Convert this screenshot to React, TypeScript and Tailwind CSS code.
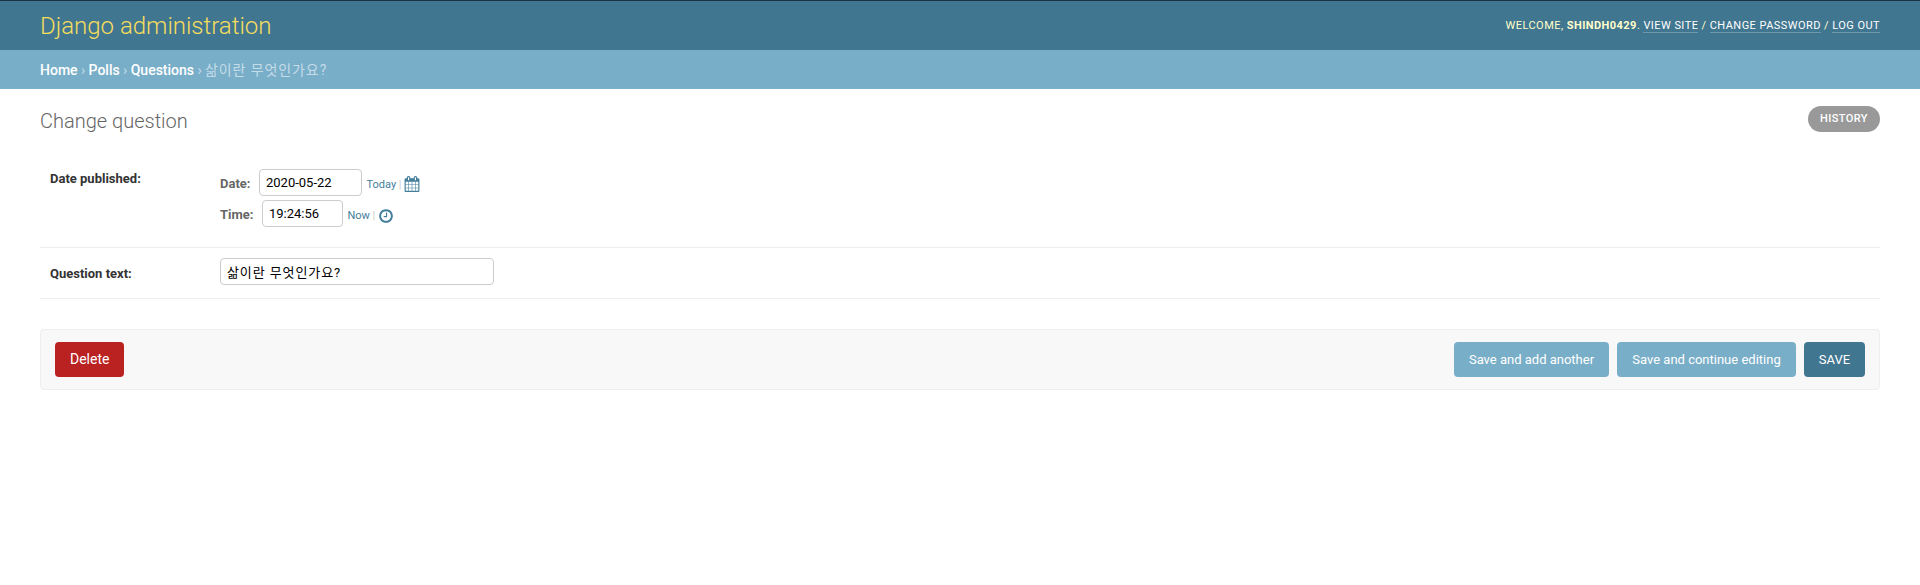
import type { ReactNode } from 'react';

function CalendarIcon() {
  return (
    <svg width="16" height="16" viewBox="0 0 1792 1792" fill="#447e9b" aria-hidden="true">
      <path d="M192 1664h288v-288h-288v288zm352 0h320v-288h-320v288zm-352-352h288v-320h-288v320zm352 0h320v-320h-320v320zm-352-384h288v-288h-288v288zm736 736h320v-288h-320v288zm-384-736h320v-288h-320v288zm768 736h288v-288h-288v288zm-384-352h320v-320h-320v320zm-352-864v-288q0-13-9.5-22.5t-22.5-9.5h-64q-13 0-22.5 9.5t-9.5 22.5v288q0 13 9.5 22.5t22.5 9.5h64q13 0 22.5-9.5t9.5-22.5zm736 864h288v-320h-288v320zm-384-384h320v-288h-320v288zm384 0h288v-288h-288v288zm32-480v-288q0-13-9.5-22.5t-22.5-9.5h-64q-13 0-22.5 9.5t-9.5 22.5v288q0 13 9.5 22.5t22.5 9.5h64q13 0 22.5-9.5t9.5-22.5zm384-64v1280q0 52-38 90t-90 38h-1408q-52 0-90-38t-38-90v-1280q0-52 38-90t90-38h128v-96q0-66 47-113t113-47h64q66 0 113 47t47 113v96h384v-96q0-66 47-113t113-47h64q66 0 113 47t47 113v96h128q52 0 90 38t38 90z" />
    </svg>
  );
}

function ClockIcon() {
  return (
    <svg className="mt-px -mb-px" width="16" height="16" viewBox="0 0 1792 1792" fill="#447e9b" aria-hidden="true">
      <path d="M1024 544v448q0 14-9 23t-23 9h-320q-14 0-23-9t-9-23v-64q0-14 9-23t23-9h224v-352q0-14 9-23t23-9h64q14 0 23 9t9 23zm416 352q0-148-73-273t-198-198-273-73-273 73-198 198-73 273 73 273 198 198 273 73 273-73 198-198 73-273zm224 0q0 209-103 385.5t-279.5 279.5-385.5 103-385.5-103-279.5-279.5-103-385.5 103-385.5 279.5-279.5 385.5-103 385.5 103 279.5 279.5 103 385.5z" />
    </svg>
  );
}

function ToolLink({ children }: { children: ReactNode }) {
  return <a href="#" className="border-b border-white/25 text-white">{children}</a>;
}

function Shortcut({ label, children }: { label: string; children: ReactNode }) {
  return (
    <span className="flex items-center pt-[3px] pl-[4.5px] text-[11px] leading-4 text-[#447e9b]">
      <a href="#" className="mt-px -mb-px">{label}</a>
      <span className="mt-px -mb-px w-[8px] text-center text-[#ccc]">|</span>
      <a href="#">{children}</a>
    </span>
  );
}

const input = 'h-[27px] rounded-[4px] border border-[#ccc] bg-white px-[6px] pb-px text-[13px] text-black outline-none';
const button = 'h-[35px] rounded-[4px] text-[13px] text-white';

export default function App() {
  return (
    <div className="min-h-[585px] bg-white font-[Roboto,'Noto_Sans_CJK_KR',sans-serif] text-[13px] text-[#333]">
      <header className="flex h-[50px] items-center justify-between border-t border-[#1b3442] bg-[#417690] px-10">
        <h1 className="text-[24px] leading-7 font-light text-[#f5dd5d]">Django administration</h1>
        <div className="text-[11px] leading-[13px] tracking-[0.45px] text-[#ffc] uppercase">
          Welcome, <strong className="font-bold">shindh0429</strong>. <ToolLink>View site</ToolLink> / <ToolLink>Change password</ToolLink> / <ToolLink>Log out</ToolLink>
        </div>
      </header>

      <nav className="flex h-[39px] items-center gap-[3.4px] bg-[#79aec8] px-10 text-[14px] leading-5 text-[#c4dce8]">
        <a href="#" className="font-medium text-white">Home</a>
        <span>›</span>
        <a href="#" className="font-medium text-white">Polls</a>
        <span>›</span>
        <a href="#" className="font-medium text-white">Questions</a>
        <span>›</span>
        <span className="tracking-[0.9px]">삶이란 무엇인가요?</span>
      </nav>

      <main className="px-10 pt-[17px]">
        <div className="flex h-[54px] items-start justify-between">
          <h2 className="pt-[3px] text-[20px] leading-6 font-light text-[#666]">Change question</h2>
          <a href="#" className="h-[26px] w-[72px] rounded-[15px] bg-[#999] text-center text-[11px] leading-[25px] font-medium tracking-[0.4px] text-white uppercase">History</a>
        </div>

        <form>
          <div className="flex h-[88px] border-b border-[#eee] px-[10px] pt-[9px]">
            <label className="w-[170px] pt-[2px] leading-4 font-bold">Date published:</label>
            <div className="flex flex-col gap-1">
              <div className="flex h-[27px] items-center">
                <label className="w-[39px] pt-[2px] font-bold text-[#666]">Date:</label>
                <input className={`${input} w-[103px]`} defaultValue="2020-05-22" />
                <Shortcut label="Today"><CalendarIcon /></Shortcut>
              </div>
              <div className="flex h-[27px] items-center">
                <label className="w-[42px] pt-[2px] font-bold text-[#666]">Time:</label>
                <input className={`${input} w-[81px]`} defaultValue="19:24:56" />
                <Shortcut label="Now"><ClockIcon /></Shortcut>
              </div>
            </div>
          </div>

          <div className="flex h-[51px] border-b border-[#eee] px-[10px] pt-[10px]">
            <label className="w-[170px] pt-[8px] leading-4 font-bold">Question text:</label>
            <input className={`${input} w-[274px] tracking-[0.9px]`} defaultValue="삶이란 무엇인가요?" />
          </div>

          <div className="mt-[30px] flex h-[61px] items-center justify-between rounded-[4px] border border-[#eee] bg-[#f8f8f8] px-[14px]">
            <a href="#" className="flex h-[35px] items-center rounded-[4px] bg-[#ba2121] px-[15px] text-[14px] text-white">Delete</a>
            <div className="flex gap-2">
              <button type="button" className={`${button} w-[155px] bg-[#79aec8]`}>Save and add another</button>
              <button type="button" className={`${button} w-[179px] bg-[#79aec8]`}>Save and continue editing</button>
              <button type="button" className={`${button} w-[61px] bg-[#417690]`}>SAVE</button>
            </div>
          </div>
        </form>
      </main>
    </div>
  );
}
